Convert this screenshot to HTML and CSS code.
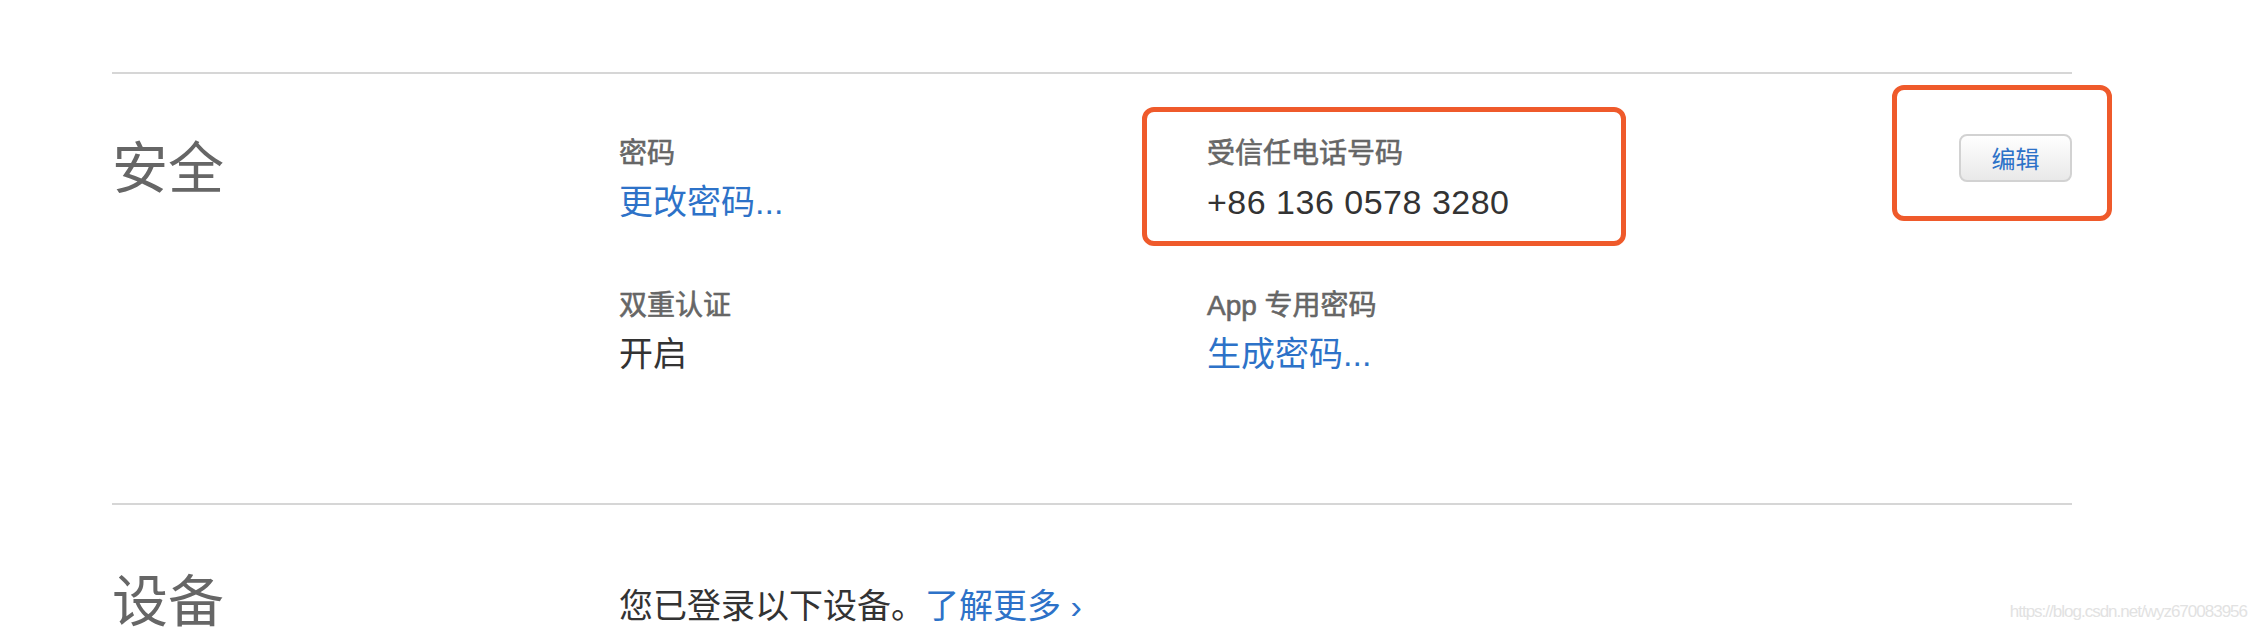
FILE: index.html
```html
<!DOCTYPE html>
<html lang="zh-CN">
<head>
<meta charset="utf-8">
<title>安全</title>
<link rel="stylesheet" href="styles.css">
</head>
<body>
<div class="page">
  <section class="section section--security">
    <h2 class="section-title">安全</h2>
    <div class="fields">
      <div class="field">
        <div class="field-label">密码</div>
        <a class="field-value link" href="#">更改密码...</a>
      </div>
      <div class="field">
        <div class="field-label">受信任电话号码</div>
        <div class="field-value phone">+86 136 0578 3280</div>
      </div>
      <div class="field">
        <div class="field-label">双重认证</div>
        <div class="field-value">开启</div>
      </div>
      <div class="field">
        <div class="field-label">App 专用密码</div>
        <a class="field-value link" href="#">生成密码...</a>
      </div>
    </div>
    <div class="actions">
      <button class="edit-btn" type="button">编辑</button>
    </div>
  </section>
  <section class="section section--devices">
    <h2 class="section-title">设备</h2>
    <div class="devices-text">您已登录以下设备。<a class="link" href="#">了解更多 ›</a></div>
  </section>
  <div class="mark mark--phone"></div>
  <div class="mark mark--edit"></div>
</div>
<div class="watermark">https://blog.csdn.net/wyz670083956</div>
</body>
</html>
```

FILE: styles.css
```css
html, body {
  margin: 0;
  padding: 0;
  background: #ffffff;
}

body {
  width: 2256px;
  height: 630px;
  overflow: hidden;
  position: relative;
  font-family: "Liberation Sans", "Noto Sans CJK SC", sans-serif;
  color: #333333;
}

.page {
  width: 1960px;
  margin-left: 112px;
  padding-top: 72px;
  position: relative;
}

.section {
  border-top: 2px solid #d6d6d6;
  display: grid;
  grid-template-columns: 507px 1fr auto;
  align-items: start;
}

.section--security {
  padding-top: 60px;
  padding-bottom: 125px;
}

.section--devices {
  padding-top: 64px;
}

.section-title {
  margin: 2px 0 0 0;
  font-family: "Noto Sans CJK SC", sans-serif;
  font-size: 56px;
  line-height: 56px;
  font-weight: 400;
  color: #666666;
}

.section--devices .section-title {
  margin-top: 0;
}

.fields {
  display: grid;
  grid-template-columns: 588px 1fr;
  row-gap: 60px;
}

.field {
  display: flex;
  flex-direction: column;
  gap: 4px;
}

.field-label {
  font-size: 28px;
  line-height: 40px;
  font-weight: 400;
  color: #666666;
  -webkit-text-stroke: 0.6px #666666;
}

.field-value {
  font-size: 34px;
  line-height: 48px;
  color: #333333;
}

.phone {
  letter-spacing: 0.5px;
}

.link {
  color: #2d72c8;
  text-decoration: none;
}

.actions {
  display: flex;
  justify-content: flex-end;
}

.edit-btn {
  width: 113px;
  height: 48px;
  padding: 0;
  border: 2px solid #d2d2d2;
  border-radius: 8px;
  background: linear-gradient(#ffffff, #e9e9e9);
  font-family: "Noto Sans CJK SC", sans-serif;
  font-size: 24px;
  line-height: 1;
  color: #2d72c8;
}

.devices-text {
  margin-top: 13px;
  font-size: 34px;
  line-height: 48px;
  color: #333333;
}

.mark {
  position: absolute;
  border: 5px solid #ef5a2b;
  border-radius: 12px;
  box-sizing: border-box;
}

.mark--phone {
  left: 1030px;
  top: 107px;
  width: 484px;
  height: 139px;
}

.mark--edit {
  left: 1780px;
  top: 85px;
  width: 220px;
  height: 136px;
}

.watermark {
  position: absolute;
  right: 9px;
  top: 602px;
  font-family: "Liberation Sans", sans-serif;
  font-size: 17px;
  letter-spacing: -1px;
  color: #e2e2e2;
}
```
